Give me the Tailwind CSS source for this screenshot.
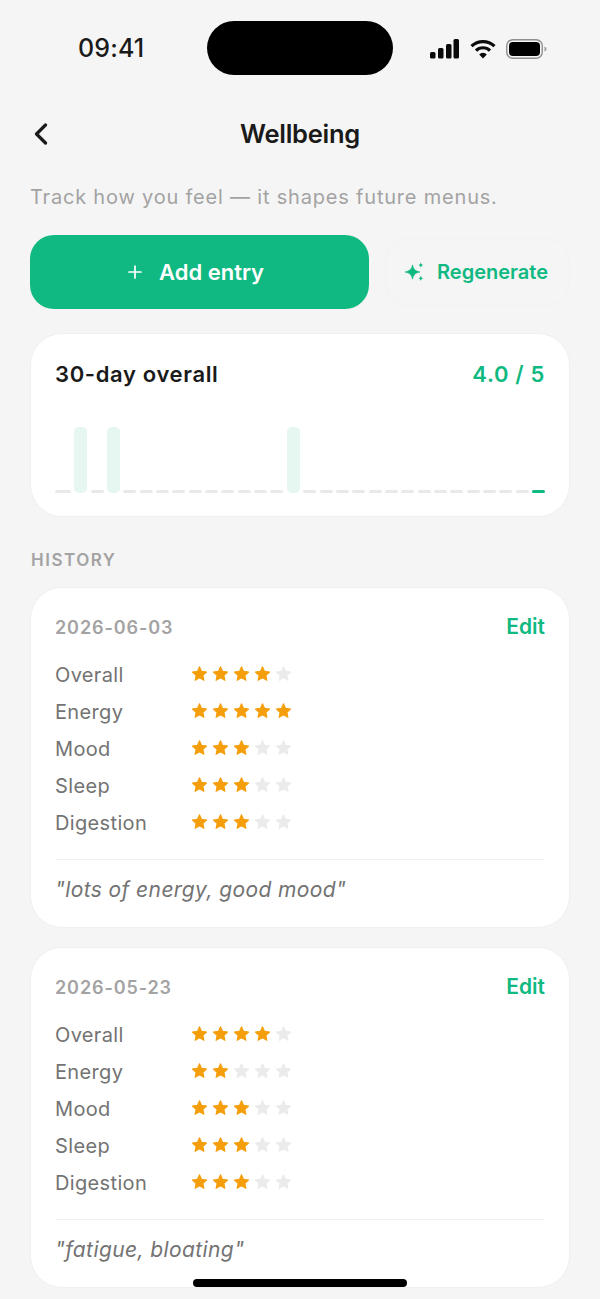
<!DOCTYPE html>
<html lang="en">
  <head>
    <meta charset="UTF-8" />
    <meta name="viewport" content="width=device-width, initial-scale=1.0" />
    <title>Wellbeing</title>
    <script src="https://cdn.jsdelivr.net/npm/@tailwindcss/browser@4"></script>
  </head>

  <body class="relative h-[1299px] w-[600px] overflow-hidden bg-[#f5f5f5] font-['Inter',sans-serif] text-[#1a1a1a]">
    <!-- Status bar -->
    <div class="flex h-[96px] items-start pt-[21px]">
      <div class="w-[207px] pt-[11px] pl-[78px] text-[25px] leading-[32px] font-medium tracking-[0.15px]">09:41</div>
      <div class="h-[54px] w-[186px] rounded-[27px] bg-black"></div>
      <div class="flex flex-1 items-center pt-[18px] pl-[37px]">
        <svg class="h-[20px] w-[30px]" viewBox="0 0 30 20" fill="#0a0a0a">
          <rect x="0" y="13" width="5.500" height="6.500" rx="1.500" />
          <rect x="8" y="9" width="5.500" height="10.500" rx="1.500" />
          <rect x="16" y="5" width="5.500" height="14.500" rx="1.500" />
          <rect x="23.500" y="0" width="5.500" height="19.500" rx="1.500" />
        </svg>
        <svg class="ml-[10px] h-[20px] w-[26px]" viewBox="0 0 26 20" fill="none" stroke="#0a0a0a" stroke-width="3.200">
          <path d="M1.500 7.200a16.500 16.500 0 0 1 23 0" />
          <path d="M6 11.600a10 10 0 0 1 14 0" />
          <path d="M13 19.500l-3.800-4a5.200 5.200 0 0 1 7.600 0z" fill="#0a0a0a" stroke="none" />
        </svg>
        <svg class="ml-[10px] h-[20px] w-[41px]" viewBox="0 0 41 20" fill="none">
          <rect x="0.750" y="0.750" width="35.500" height="18.500" rx="6" stroke="#8f8f8f" stroke-width="1.400" />
          <rect x="3" y="3" width="31" height="14" rx="4" fill="#000" />
          <path d="M38.500 7.500c1.400.4 2 1.400 2 2.500s-.6 2.100-2 2.500z" fill="#9a9a9a" />
        </svg>
      </div>
    </div>

    <!-- Header -->
    <header class="relative mt-[18px] flex h-[40px] items-center justify-center">
      <svg class="absolute top-[9px] left-[33px] h-[22px] w-[16px]" viewBox="0 0 16 22" fill="none" stroke="#1a1a1a" stroke-width="3.200" stroke-linecap="round" stroke-linejoin="round">
        <path d="M12.500 2 3.500 11l9 9" />
      </svg>
      <h1 class="text-[25.500px] leading-[32px] font-semibold tracking-[-0.25px]">Wellbeing</h1>
    </header>

    <main class="px-[30px]">
      <p class="mt-[27px] text-[20px] leading-[32px] tracking-[0.8px] whitespace-nowrap text-[#a3a3a3]">Track how you feel — it shapes future menus.</p>

      <!-- Actions -->
      <div class="mt-[22px] flex items-center gap-[16px]">
        <button class="flex h-[74px] w-[339px] items-center justify-center gap-[17px] rounded-[24px] bg-[#10b981] pr-[7px] text-[22px] font-semibold text-white">
          <svg class="h-[14px] w-[14px]" viewBox="0 0 14 14" fill="none" stroke="white" stroke-width="1.700" stroke-linecap="round">
            <path d="M7 1v12M1 7h12" />
          </svg>
          Add entry
        </button>
        <button class="flex h-[68px] w-[185px] items-center justify-center gap-[12px] rounded-[24px] border border-[#f2f2f2] bg-[#f5f5f5] pr-[2px] text-[20px] font-semibold text-[#10b981]">
          <svg class="h-[20px] w-[20px]" viewBox="0 0 20 20" fill="#10b981">
            <path d="M7.500 2.800c.8 3.600 1.800 6 7.500 7.200-5.700 1.200-6.700 3.600-7.500 7.200C6.700 13.600 5.700 11.200 0 10c5.700-1.200 6.700-3.600 7.500-7.200z" stroke="#10b981" stroke-width="0.600" stroke-linejoin="round" />
            <path d="M15.800 .3c.4 1.800 1 2.400 2.700 2.800-1.700.4-2.300 1-2.700 2.800-.4-1.800-1-2.400-2.700-2.800 1.700-.4 2.300-1 2.700-2.800z" />
            <path d="M15.800 13.500c.4 1.800 1 2.400 2.700 2.800-1.700.4-2.300 1-2.700 2.800-.4-1.800-1-2.400-2.700-2.800 1.700-.4 2.300-1 2.700-2.800z" />
          </svg>
          Regenerate
        </button>
      </div>

      <!-- 30-day overall -->
      <section class="mt-[24px] h-[184px] rounded-[32px] border border-[#f0f0f0] bg-white px-[24px] pt-[24px]">
        <div class="flex items-center justify-between text-[22px] leading-[32px] font-semibold tracking-[0.65px]">
          <span>30-day overall</span>
          <span class="text-[#10b981]">4.0 / 5</span>
        </div>
        <div id="chart" class="mt-[36px] flex h-[67px] items-end justify-between"></div>
      </section>

      <h2 class="mt-[31px] pl-[1px] text-[17px] leading-[24px] font-semibold tracking-[1.500px] text-[#a3a3a3]">HISTORY</h2>

      <div id="history" class="mt-[15px] flex flex-col gap-[19px]"></div>
    </main>

    <!-- Home indicator -->
    <div class="absolute top-[1279px] left-[193px] h-[8px] w-[214px] rounded-full bg-black"></div>

    <script>
      const chart = document.getElementById("chart");
      for (let i = 0; i < 30; i++) {
        const bar = document.createElement("div");
        if (i === 1 || i === 3 || i === 14) {
          bar.className = "h-[66px] w-[13px] rounded-[5px] bg-[#e6f6f0]";
        } else if (i === 29) {
          bar.className = "h-[3px] w-[13px] rounded-full bg-[#10b981]";
        } else if (i === 0) {
          bar.className = "h-[3px] w-[16px] rounded-full bg-[#e9e9e9]";
        } else {
          bar.className = "h-[3px] w-[13px] rounded-full bg-[#e9e9e9]";
        }
        chart.appendChild(bar);
      }

      const entries = [
        { date: "2026-06-03", note: '"lots of energy, good mood"', scores: [4, 5, 3, 3, 3] },
        { date: "2026-05-23", note: '"fatigue, bloating"', scores: [4, 2, 3, 3, 3] },
      ];
      const labels = ["Overall", "Energy", "Mood", "Sleep", "Digestion"];

      function stars(score) {
        let html = "";
        for (let i = 0; i < 5; i++) {
          html += `<svg class="h-[17px] w-[17px] ${i < score ? "fill-[#f59e0b] stroke-[#f59e0b]" : "fill-[#ebebeb] stroke-[#ebebeb]"}" viewBox="0 0 24 24" stroke-width="1.500" stroke-linejoin="round"><path d="M12 2.500l3 6.500 7 .9-5.200 4.800 1.400 7L12 18.200l-6.200 3.500 1.400-7L2 9.900 9 9z" /></svg>`;
        }
        return html;
      }

      document.getElementById("history").innerHTML = entries
        .map(
          (e) => `
        <section class="h-[341px] rounded-[32px] border border-[#f0f0f0] bg-white px-[24px] pt-[24px]">
          <div class="flex h-[30px] items-center justify-between">
            <span class="text-[18px] font-semibold tracking-[0.9px] text-[#a3a3a3]">${e.date}</span>
            <span class="text-[21px] font-semibold text-[#10b981]">Edit</span>
          </div>
          <div class="mt-[18px] flex flex-col gap-[7px]">
            ${e.scores
              .map(
                (s, i) => `
            <div class="flex h-[30px] items-center">
              <span class="w-[136px] text-[20px] tracking-[0.35px] text-[#737373]">${labels[i]}</span>
              <span class="flex -translate-y-[2px] gap-[4px]">${stars(s)}</span>
            </div>`
              )
              .join("")}
          </div>
          <div class="mt-[21px] border-t border-[#f0f0f0] pt-[15px] text-[21px] leading-[30px] tracking-[0.4px] text-[#737373] italic">${e.note}</div>
        </section>`
        )
        .join("");
    </script>
  </body>
</html>
